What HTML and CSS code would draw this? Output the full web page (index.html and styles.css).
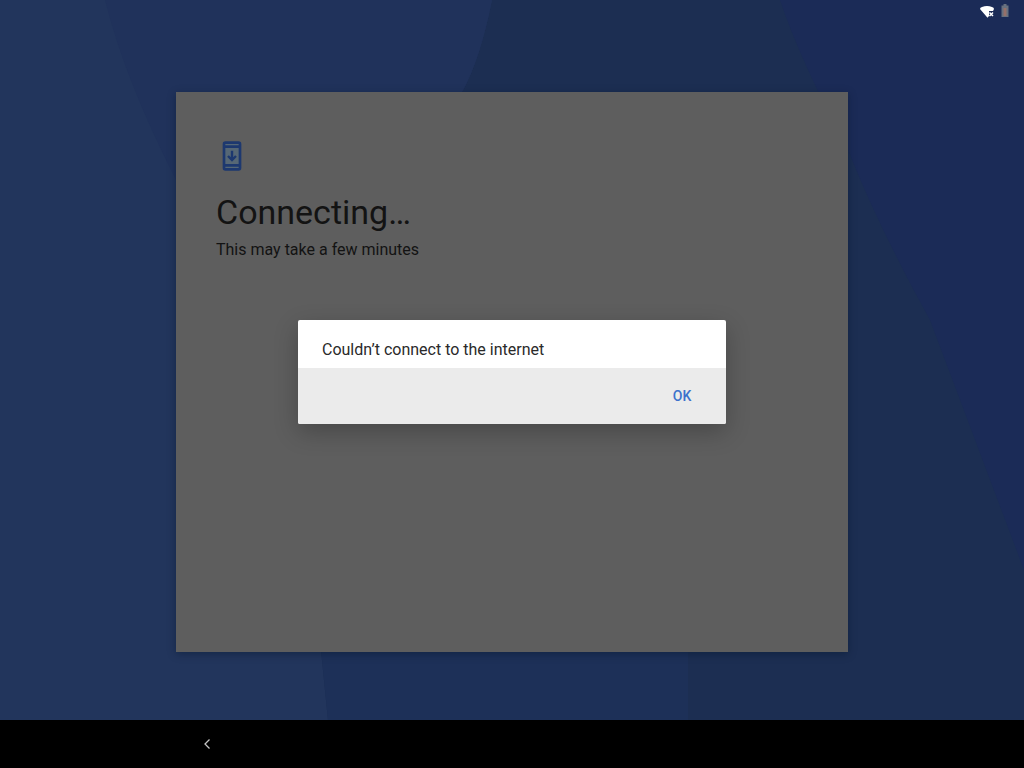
FILE: index.html
```html
<!DOCTYPE html>
<html lang="en">
<head>
  <meta charset="UTF-8">
  <meta name="viewport" content="width=device-width, initial-scale=1.0">
  <title>Connecting…</title>
  <link rel="stylesheet" href="styles.css">
</head>
<body>
<div class="screen">
  <svg class="wallpaper" viewBox="0 0 1024 720" preserveAspectRatio="none" aria-hidden="true">
    <rect width="1024" height="720" fill="#1c2e52"/>
    <path d="M0 0H492Q480 60 462 92L320 640L328 720H0Z" fill="#22355c"/>
    <path d="M105 0Q125 80 176 180L400 400L462 92Q480 60 492 0Z" fill="#20325b"/>
    <path d="M320 640H688V720H328Z" fill="#1d3058"/>
    <path d="M780 0Q800 60 848 150Q880 230 930 320L1024 570V0Z" fill="#1b2b57"/>
  </svg>

  <header class="status-bar">
    <svg class="status-icon" width="16" height="16" viewBox="0 0 16 16" role="img" aria-label="Wi-Fi, no internet">
      <path d="M1 5Q1 3.600 3 3Q8 .9 13 3Q15 3.600 15 5L14 7H10V12L8.500 13.700Z" fill="#fff"/>
      <path d="M10.500 8.500L14 12M14 8.500L10.500 12" stroke="#fff" stroke-width="1.500"/>
    </svg>
    <svg class="status-icon" width="16" height="16" viewBox="0 0 16 16" role="img" aria-label="Battery low">
      <path d="M6.500 0H9.500V1.500H11.500V13H4.500V1.500H6.500Z" fill="#67707f"/>
      <path d="M6.500 4H9.500V12H6.500Z" fill="#95706a"/>
    </svg>
  </header>

  <main class="content">
    <section class="card">
      <svg class="card-icon" width="32" height="32" viewBox="0 0 24 24" aria-hidden="true">
        <path d="M7 1h10q2 0 2 2v18q0 2-2 2H7q-2 0-2-2V3q0-2 2-2z" fill="#1d386f"/>
        <path d="M7 3h10v1H7zM7 6h10v12H7zM7 20h10v1H7z" fill="#566775"/>
        <path d="M12 8v7M9 12l3 3 3-3" fill="none" stroke="#1d386f" stroke-width="1.800"/>
      </svg>
      <h1 class="title">Connecting…</h1>
      <p class="subtitle">This may take a few minutes</p>
    </section>
  </main>

  <nav class="nav-bar">
    <button class="back-button" type="button" aria-label="Back">
      <svg width="16" height="16" viewBox="0 0 16 16" aria-hidden="true">
        <path d="M9.500 3.500L5 8L9.500 12.500" fill="none" stroke="#c4c4c4" stroke-width="1.300"/>
      </svg>
    </button>
  </nav>

  <!-- Error dialog -->
  <div class="overlay">
    <div class="dialog" role="alertdialog" aria-modal="true" aria-labelledby="message">
      <p class="dialog-message" id="message">Couldn’t connect to the internet</p>
      <div class="dialog-actions">
        <button class="dialog-button" type="button">OK</button>
      </div>
    </div>
  </div>
</div>
</body>
</html>
```
FILE: styles.css
```css
* {
  box-sizing: border-box;
}

body {
  margin: 0;
  background: #000;
  font-family: Roboto, "Liberation Sans", sans-serif;
}

h1, p {
  margin: 0;
  font-weight: 400;
}

svg {
  display: block;
}

button {
  border: none;
  background: none;
  font-family: inherit;
  cursor: pointer;
}

.screen {
  position: relative;
  display: flex;
  flex-direction: column;
  min-height: 100vh;
}

.wallpaper {
  position: absolute;
  inset: 0 0 48px;
  width: 100%;
  height: calc(100% - 48px);
}

.status-bar {
  position: relative;
  display: flex;
  justify-content: flex-end;
  gap: 2px;
  height: 24px;
  padding: 4px 11px;
}

.content {
  position: relative;
  flex: 1;
  display: flex;
  align-items: center;
  justify-content: center;
  padding: 24px;
}

.card {
  width: 100%;
  max-width: 672px;
  min-height: 560px;
  padding: 48px 40px;
  background: #5e5e5e;
  color: #131313;
  box-shadow: 0 2px 8px rgba(0, 20, 40, 0.4);
}

.title {
  margin-top: 16px;
  font-size: 34px;
  line-height: 48px;
}

.subtitle {
  margin-top: 2px;
  font-size: 16px;
  line-height: 24px;
}

.nav-bar {
  position: relative;
  display: flex;
  align-items: center;
  height: 48px;
  padding-left: 18%;
  background: #000;
}

.back-button {
  padding: 16px;
}

/* sits between the status bar and the navigation bar */
.overlay {
  position: absolute;
  inset: 24px 0 48px;
  display: flex;
  align-items: center;
  justify-content: center;
  padding: 24px;
}

.dialog {
  width: 100%;
  max-width: 428px;
  overflow: hidden;
  border-radius: 2px;
  background: #fff;
  box-shadow: 0 8px 24px rgba(0, 0, 0, 0.24);
}

.dialog-message {
  padding: 18px 24px 6px;
  color: #2a2a2a;
  font-size: 16px;
  line-height: 24px;
}

.dialog-actions {
  display: flex;
  justify-content: flex-end;
  padding: 8px 12px;
  background: #ebebeb;
}

.dialog-button {
  min-width: 64px;
  height: 40px;
  color: #3d72cc;
  font-size: 14px;
  font-weight: 500;
}
```
